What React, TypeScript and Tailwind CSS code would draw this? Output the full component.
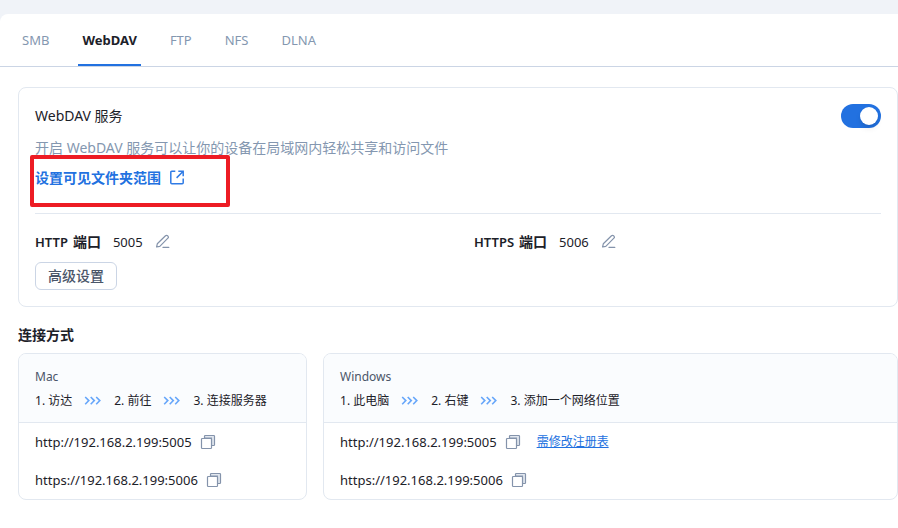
import type { ReactNode } from 'react';

const TABS = ['SMB', 'WebDAV', 'FTP', 'NFS', 'DLNA'];

function EditIcon() {
  return (
    <svg className="h-4 w-4" viewBox="0 0 16 16" fill="none" stroke="#8493ab" strokeWidth="1.2" strokeLinejoin="round" strokeLinecap="round">
      <path d="M1.6 13l.7-3.2 8.2-8a1.5 1.5 0 012.1 0l.3.3a1.5 1.5 0 010 2.1l-8.1 8.1-3.2.7z" />
      <path d="M8 13.4h5.8" />
    </svg>
  );
}

function CopyIcon() {
  return (
    <svg className="h-4 w-4" viewBox="0 0 16 16" fill="none" stroke="#8493ab" strokeWidth="1.2">
      <path d="M4.5 4V2.3a.8.8 0 01.8-.8h8.4a.8.8 0 01.8.8v8.4a.8.8 0 01-.8.8H11.5V4z" fill="#e3e8f0" />
      <rect x="1.5" y="4.5" width="10" height="10" rx="0.8" fill="#fff" />
    </svg>
  );
}

function ExternalIcon() {
  return (
    <svg className="h-4 w-4" viewBox="0 0 16 16" fill="none" stroke="#2f7be5" strokeWidth="1.5">
      <path d="M6.3 1.3H2.8a1 1 0 00-1 1v10.4a1 1 0 001 1h10.4a1 1 0 001-1V8.5" />
      <path d="M9.3 1.3h4.9v4.9M14.2 1.3L7.6 7.9" />
    </svg>
  );
}

function Arrows() {
  return (
    <svg className="h-3 w-[18px]" viewBox="0 0 18 12" fill="none" stroke="#66a6fa" strokeWidth="1.6">
      <path d="M1.2 2l3.6 3.6-3.6 3.6M6.7 2l3.6 3.6-3.6 3.6M12.2 2l3.6 3.6-3.6 3.6" />
    </svg>
  );
}

function Port({ id, label, value }: { id: string; label: string; value: string }) {
  return (
    <div className="flex h-5 items-center">
      <h3 id={id} className="mr-3 flex gap-[5px] text-sm/5 font-semibold">
        <span className="text-[13px]/5">{label}</span>
        <span>端口</span>
      </h3>
      <span aria-labelledby={id} className="mr-3 text-[13px]/5">{value}</span>
      <button type="button" aria-label={`编辑 ${label} 端口`}>
        <EditIcon />
      </button>
    </div>
  );
}

function Address({ url, children }: { url: string; children?: ReactNode }) {
  return (
    <div className="flex h-[38px] items-center">
      <span className="mr-2 text-[13px]/5">{url}</span>
      <button type="button" aria-label={`复制 ${url}`}>
        <CopyIcon />
      </button>
      {children}
    </div>
  );
}

function ConnectCard({ title, steps, children }: { title: string; steps: string[]; children?: ReactNode }) {
  return (
    <section className="overflow-hidden rounded-lg border border-[#e2e8f0]">
      <header className="border-b border-[#e2e8f0] bg-[#fafcfe] px-4 pt-[11px] pb-[9px]">
        <h3 className="text-xs/6 text-[#4b5669]">{title}</h3>
        <ol className="flex items-center gap-3 text-xs/6 whitespace-nowrap">
          {steps.map((step, i) => (
            <li key={step} className="flex items-center gap-3">
              {i > 0 && <Arrows />}
              <span>{i + 1}. {step}</span>
            </li>
          ))}
        </ol>
      </header>
      <div className="px-4">
        <Address url="http://192.168.2.199:5005">{children}</Address>
        <Address url="https://192.168.2.199:5006" />
      </div>
    </section>
  );
}

export default function App() {
  return (
    <div className="min-h-screen bg-[#f0f3f8] pt-[14px] font-['Noto_Sans','Noto_Sans_CJK_SC',sans-serif] text-[#1c2129]">
      <main className="min-h-[calc(100vh-14px)] rounded-tl-lg bg-white">
        <nav className="flex gap-[25px] border-b border-[#cbd5e5] px-[18px]">
          {TABS.map((tab) => (
            <button
              key={tab}
              type="button"
              aria-pressed={tab === 'WebDAV'}
              className={
                tab === 'WebDAV'
                  ? 'h-[52px] border-b-2 border-[#2271e0] px-1 pt-1 text-[13px] font-bold'
                  : 'h-[52px] border-b-2 border-transparent px-1 pt-1 text-[13px] text-[#8497b0]'
              }
            >
              {tab}
            </button>
          ))}
        </nav>

        <div className="pt-5 pl-[18px]">
          <section className="rounded-lg border border-[#e2e8f0] px-4 py-4">
            <div className="flex items-start justify-between">
              <div>
                <h2 className="text-sm/6">WebDAV 服务</h2>
                <p className="mt-2 text-sm/6 text-[#8497b0]">
                  开启 WebDAV 服务可以让你的设备在局域网内轻松共享和访问文件
                </p>
                <div className="relative mt-2 flex h-5">
                  <a href="#folders" className="flex items-center gap-2 text-sm/5 font-bold text-[#2271e0]">
                    设置可见文件夹范围
                    <ExternalIcon />
                  </a>
                  <div className="pointer-events-none absolute -top-[13px] -left-[5px] h-[52px] w-[200px] rounded-xs border-4 border-[#ed1c24]" />
                </div>
              </div>
              <label className="relative flex h-6 w-10">
                <input type="checkbox" role="switch" defaultChecked aria-label="WebDAV 服务" className="peer h-6 w-10 appearance-none rounded-full bg-gray-300 checked:bg-[#2271e0]" />
                <span className="pointer-events-none absolute top-[3px] left-[3px] h-[18px] w-[18px] rounded-full bg-white shadow-md peer-checked:left-[19px]" />
              </label>
            </div>

            <hr className="mt-[25px] border-[#e2e8f0]" />

            <div className="mt-[18px] grid grid-cols-2 gap-8">
              <Port id="http-port" label="HTTP" value="5005" />
              <Port id="https-port" label="HTTPS" value="5006" />
            </div>
            <button type="button" className="mt-[10px] block h-7 rounded-md border border-[#cbd5e5] px-3 text-sm/5 font-medium text-[#4b5669]">
              高级设置
            </button>
          </section>

          <h2 className="mt-[18px] text-sm/5 font-bold">连接方式</h2>
          <div className="mt-2 grid grid-cols-[289fr_575fr] gap-4">
            <ConnectCard title="Mac" steps={['访达', '前往', '连接服务器']} />
            <ConnectCard title="Windows" steps={['此电脑', '右键', '添加一个网络位置']}>
              <a href="#registry" className="ml-4 text-xs/5 text-[#2271e0] underline">
                需修改注册表
              </a>
            </ConnectCard>
          </div>
        </div>
      </main>
    </div>
  );
}
